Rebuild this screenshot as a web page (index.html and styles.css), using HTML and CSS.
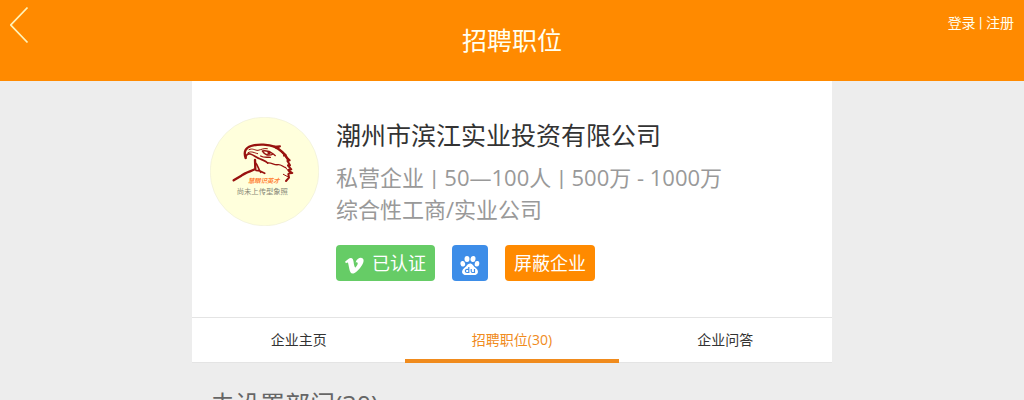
FILE: index.html
```html
<!DOCTYPE html>
<html lang="zh-CN">
<head>
<meta charset="utf-8">
<meta name="viewport" content="width=device-width, initial-scale=1">
<title>招聘职位</title>
<link rel="stylesheet" href="styles.css">
</head>
<body>
<header class="topbar">
  <a class="back" href="#" aria-label="返回">
    <svg width="20" height="38" viewBox="0 0 20 38" fill="none" stroke="currentColor" stroke-width="1.8"><path d="M17.500 1.500.8 19 17.500 36.500"/></svg>
  </a>
  <h1 class="page-title">招聘职位</h1>
  <nav class="account"><a href="#">登录</a><span class="sep"> | </span><a href="#">注册</a></nav>
</header>
<main class="container">
  <section class="company">
    <svg class="avatar" viewBox="30 21 327 327" role="img" aria-label="尚未上传形象照">
      <circle cx="193.500" cy="184.500" r="163" fill="#ffffdc" stroke="#e9e9d6" stroke-width="1.500"/>
      <g fill="none" stroke="#98120f" stroke-linecap="round" stroke-linejoin="round">
        <path stroke-width="7" d="M137 144C130 125 137 113 153 108C175 101 207 103 223 110C242 119 256 132 265 151"/>
        <path stroke-width="5" d="M137 144C138 134 143 130 151 132C162 135 170 144 181 147C190 151 198 153 203 159"/>
        <path stroke-width="3" d="M147 119C157 113 166 122 174 121C184 119 191 114 202 116M144 128C155 122 163 129 173 131"/>
        <path stroke-width="4" d="M187 123C198 121 210 124 220 132C208 138 196 136 187 123M182 138C191 144 203 141 211 142M220 132L226 137"/>
        <path stroke-width="4" d="M203 159C215 157 222 166 234 164C244 163 247 170 257 173"/>
        <path stroke-width="7" d="M165 150L166 177C153 184 136 187 124 197L101 211"/>
        <path stroke-width="5" d="M165 157C175 165 174 177 182 187M168 181L180 183L194 190"/>
        <path stroke-width="6" d="M223 110L240 109L229 114M246 126L257 135L252 137M259 142L269 151L262 153M263 154L270 166L264 166M264 167L274 178L266 179M266 182L277 189L268 190M265 192L267 203L258 213"/>
        <path stroke-width="3" d="M257 173L267 185M250 193L265 201"/>
      </g>
      <circle cx="207" cy="129" r="5" fill="#98120f"/>
      <text class="avatar-brand" x="144" y="220">慧眼识英才</text>
      <text class="avatar-note" x="110" y="252">尚未上传型象照</text>
    </svg>
    <div class="details">
      <h2 class="name">潮州市滨江实业投资有限公司</h2>
      <p class="info">私营企业<span class="sep"> | </span>50—100人<span class="sep"> | </span>500万 - 1000万<br>综合性工商/实业公司</p>
      <div class="actions">
        <span class="badge verified">
          <svg width="20" height="18" viewBox="0 0 20 18" fill="#fff"><path d="M0 4.800C2 3 4.500.9 6 1.100C8.700 1.300 8.400 5.100 9.200 8.300C9.700 10.200 10.100 10.800 10.700 10.200C11.600 9.300 13 7 12.700 6C12.400 5 11.400 5.200 10.600 5.600C11.700 2 14.100.6 16.500.9C19.200 1.300 19 4.300 17.500 7.200C15.400 11.100 11.300 15.700 8.500 16.500C5.900 17.200 5 14.700 4.300 11.700C3.700 9.200 3.400 6.100 2.700 5.500C2.400 5.200 1.800 5.600 1 6.200Z"/></svg>
          已认证
        </span>
        <a class="badge baidu" href="#" aria-label="百度">
          <svg width="20" height="22" viewBox="0 0 20 22"><g fill="#fff"><ellipse cx="7" cy="4" rx="2.500" ry="3"/><ellipse cx="13" cy="4" rx="2.500" ry="3" transform="rotate(10 13 4)"/><ellipse cx="2.800" cy="8.800" rx="2.300" ry="2.800" transform="rotate(-15 2.800 8.800)"/><ellipse cx="17" cy="8.800" rx="2.300" ry="2.800" transform="rotate(10 17 8.800)"/><path d="M10 8.500C12.500 8.500 13.200 11 15.200 12.500C18.500 15 18.500 17.500 17 19C15.300 20.600 12.500 20 10 20C7.500 20 4.700 20.600 3 19C1.500 17.400 1.800 15 4.800 12.500C7 10.800 7.500 8.500 10 8.500Z"/></g><g fill="none" stroke="#3d8de8" stroke-width="1.200"><path d="M8.800 12V18M8.800 14.400H7C4.800 14.400 4.800 17.500 7 17.500H8.800M11.200 14V16C11.200 17 11.700 17.500 12.500 17.500H14.500V14"/></g></svg>
        </a>
        <button class="badge block" type="button">屏蔽企业</button>
      </div>
    </div>
  </section>
  <nav class="tabs">
    <a class="tab" href="#">企业主页</a>
    <a class="tab active" href="#" aria-current="page">招聘职位(30)</a>
    <a class="tab" href="#">企业问答</a>
  </nav>
  <h3 class="department">未设置部门(30)</h3>
</main>
</body>
</html>
```
FILE: styles.css
```css
* { box-sizing: border-box; }
html { scrollbar-width: none; }
body {
  margin: 0;
  background: #ededed;
  color: #333;
  font: 14px/20px "Open Sans", "Noto Sans CJK SC", sans-serif;
}
a { color: inherit; text-decoration: none; }
h1, h2, h3, p { margin: 0; font-weight: 400; }
.sep { font-family: Roboto, sans-serif; line-height: 1; }
.topbar {
  display: grid;
  grid-template-columns: 1fr auto 1fr;
  align-items: start;
  padding: 0 10px;
  background: #ff8a00;
  color: #fffff0;
}
.back { padding-top: 6px; color: #fff3b8; }
.back svg { display: block; }
.page-title { font-size: 25px; line-height: 81px; }
.account { justify-self: end; padding-top: 13px; }
.container { max-width: 640px; margin: 0 auto; }
.company {
  display: flex;
  gap: 17px;
  padding: 36px 18px;
  background: #fff;
  border-bottom: 1px solid #e4e4e4;
}
.avatar { flex: none; width: 109px; height: 109px; }
.avatar-brand { fill: #ff8438; font-size: 19px; font-weight: 700; font-style: italic; }
.avatar-note { fill: #888878; font-size: 22px; }
.name { font-size: 25px; line-height: 36px; }
.info { margin-top: 8px; color: #999; font-size: 22px; line-height: 32px; }
.info .sep { margin: 0 2px; }
.actions { display: flex; gap: 17px; margin-top: 20px; }
.badge {
  display: flex;
  align-items: center;
  justify-content: center;
  height: 36px;
  padding: 0 9px;
  border: 0;
  border-radius: 4px;
  color: #fff;
  font: inherit;
  font-size: 18px;
}
.badge svg { flex: none; margin-top: 5px; }
.verified { gap: 7px; background: #66cc66; }
.baidu { width: 36px; padding: 0; background: #3d8de8; }
.block { background: #ff8a00; }
.tabs {
  display: grid;
  grid-template-columns: repeat(3, 1fr);
  background: #fff;
  box-shadow: inset 0 -1px #e4e4e4;
}
.tab { padding-top: 3px; border-bottom: 4px solid transparent; line-height: 38px; text-align: center; }
.active { border-color: #f08b1d; color: #f08b1d; }
.department { padding: 22px 18px; color: #666; font-size: 25px; line-height: 38px; }
```
